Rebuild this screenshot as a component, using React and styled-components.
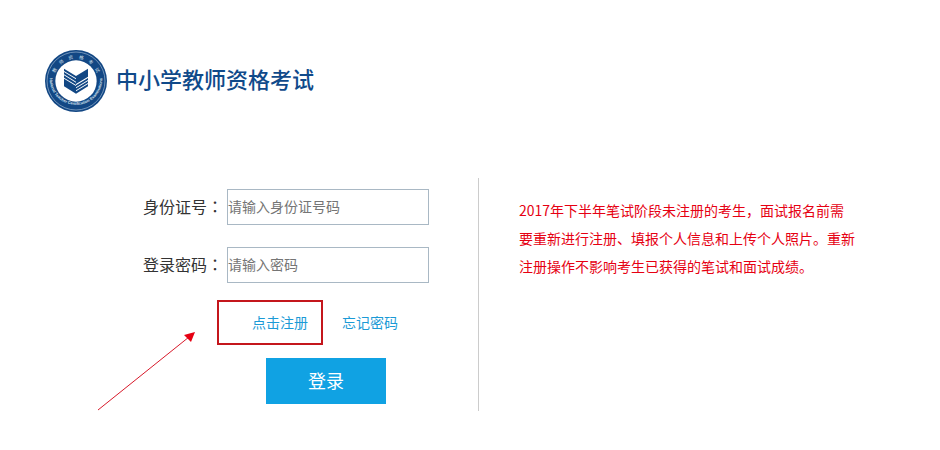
import React from 'react';
import styled, { createGlobalStyle } from 'styled-components';

const GlobalStyle = createGlobalStyle`
  * { box-sizing: border-box; }
  body {
    margin: 0;
    background: #fff;
    color: #333;
    font-family: "Noto Sans CJK SC", sans-serif;
  }
`;

const Header = styled.header`
  display: flex;
  align-items: center;
  gap: 9px;
  padding: 50px 45px 0;
`;

const Title = styled.h1`
  margin: 0;
  padding-bottom: 6px;
  color: #104a8a;
  font-size: 22px;
  line-height: 32px;
  font-weight: 500;
`;

const Main = styled.main`
  display: grid;
  grid-template-columns: 478fr 462fr;
  margin-top: 66px;
`;

const LoginForm = styled.form`
  padding: 11px 49px 7px 143px;
`;

const Field = styled.div`
  display: flex;
  align-items: center;
  gap: 4px;
  margin-bottom: 22px;
`;

const Label = styled.label`
  flex: none;
  padding-bottom: 2px;
  font-size: 16px;
  line-height: 24px;
`;

const Colon = styled.span`
  font-family: "Noto Sans CJK JP", sans-serif;
`;

const Input = styled.input`
  flex: 1;
  min-width: 0;
  height: 36px;
  padding: 0 0 2px;
  border: 1px solid #a9b8c4;
  border-radius: 0;
  background: #fff;
  color: #333;
  font-family: inherit;
  font-size: 14px;

  &::placeholder {
    color: #757575;
    opacity: 1;
  }
`;

const Links = styled.div`
  display: flex;
  align-items: center;
  gap: 19px;
  margin-top: -5px;
  padding-left: 74px;
`;

const Highlight = styled.div`
  position: relative;
  padding: 8px 13px 7px 33px;
  border: 2px solid #c4161c;
`;

const TextLink = styled.a`
  display: block;
  padding-bottom: 2px;
  color: #1b9ad6;
  font-size: 14px;
  line-height: 24px;
  text-decoration: none;
`;

const Pointer = styled.svg`
  position: absolute;
  top: 28px;
  right: 124px;
`;

const Submit = styled.button`
  display: block;
  width: 120px;
  height: 46px;
  margin: 13px 0 0 123px;
  padding: 0 0 2px;
  border: 0;
  background: #10a2e3;
  color: #fff;
  font-family: inherit;
  font-size: 18px;
`;

const Notice = styled.aside`
  padding: 18px 84px 0 40px;
  border-left: 1px solid #ccc;
`;

const NoticeText = styled.p`
  margin: 0;
  color: #e60012;
  font-size: 14px;
  line-height: 28px;
`;

const sealChars = [
  ['教', -63],
  ['师', -38],
  ['资', -13],
  ['格', 13],
  ['考', 38],
  ['试', 63],
];

const Seal = () => (
  <svg width="62" height="62" viewBox="0 0 186 186" role="img" aria-label="教师资格考试">
    <circle cx="93" cy="93" r="93" fill="#124784" />
    <circle cx="93" cy="93" r="87" fill="none" stroke="#9fb8d3" strokeWidth="2" />
    <circle cx="93" cy="93" r="62" fill="#fff" />
    <path id="seal-arc" d="M14 86 A79 79 0 1 0 172 86" fill="none" />
    {sealChars.map(([char, angle]) => (
      <text key={char} x="93" y="26" fontSize="14" fill="#d5e1ee" textAnchor="middle" transform={`rotate(${angle} 93 93)`}>{char}</text>
    ))}
    <text fontSize="12" fontWeight="700" fill="#d5e1ee" fontFamily="Liberation Sans, sans-serif">
      <textPath href="#seal-arc" startOffset="50%" textAnchor="middle">National Teacher Certification Examinations</textPath>
    </text>
    <g fill="#124784">
      <path d="M57 56 L93 78 V85 L57 63 Z" />
      <path d="M57 66 L93 88 V95 L57 73 Z" />
      <path d="M57 76 L93 98 V105 L57 83 Z" />
      <path d="M57 86 L93 108 V131 L57 109 Z" />
      <path d="M129 56 L93 78 V102 L129 80 Z" />
      <path d="M129 84 L93 106 V112 L129 90 Z" />
      <path d="M129 93 L93 115 V121 L129 99 Z" />
      <path d="M129 102 L93 124 V131 L129 109 Z" />
    </g>
  </svg>
);

const App = () => (<>
  <GlobalStyle />
  <Header>
    <Seal />
    <Title>中小学教师资格考试</Title>
  </Header>
  <Main>
    <LoginForm onSubmit={(e) => e.preventDefault()}>
      <Field>
        <Label htmlFor="idNumber">身份证号<Colon>：</Colon></Label>
        <Input id="idNumber" type="text" placeholder="请输入身份证号码" />
      </Field>
      <Field>
        <Label htmlFor="password">登录密码<Colon>：</Colon></Label>
        <Input id="password" type="password" placeholder="请输入密码" />
      </Field>
      <Links>
        <Highlight>
          <TextLink href="#register">点击注册</TextLink>
          <Pointer width="100" height="82" viewBox="0 0 100 82" aria-hidden="true">
            <path d="M1 80 L92 7" stroke="#d8192a" fill="none" />
            <path d="M98 2 L94 12 L87 5 Z" fill="#e60012" />
          </Pointer>
        </Highlight>
        <TextLink href="#forgot">忘记密码</TextLink>
      </Links>
      <Submit type="submit">登录</Submit>
    </LoginForm>
    <Notice>
      <NoticeText>2017年下半年笔试阶段未注册的考生，面试报名前需要重新进行注册、填报个人信息和上传个人照片。重新注册操作不影响考生已获得的笔试和面试成绩。</NoticeText>
    </Notice>
  </Main>
</>);

export default App;
